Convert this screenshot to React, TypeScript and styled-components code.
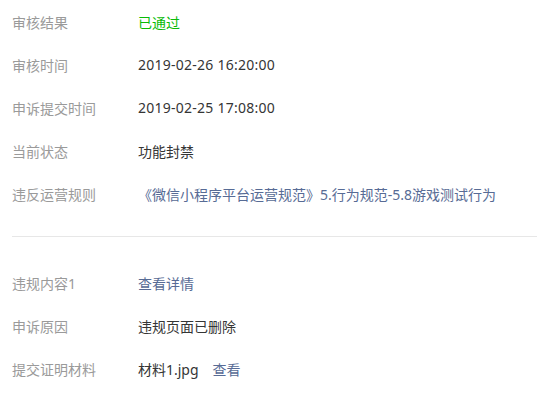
import React from "react";
import styled, { createGlobalStyle } from "styled-components";

const Global = createGlobalStyle`
  html, body { margin: 0; padding: 0; background: #fff; }
  body { font-family: "Noto Sans", "Noto Sans CJK SC", sans-serif; }
`;

const Page = styled.div`
  padding-left: 12px;
  background: #fff;
`;

const Section = styled.div`
  display: flex;
  flex-direction: column;
`;

const Row = styled.div`
  display: flex;
  align-items: center;
  height: 43px;
  font-size: 14px;
`;

const Label = styled.div`
  width: 126px;
  flex-shrink: 0;
  color: #9a9a9a;
`;

const Value = styled.div<{ $tone?: "green" | "link" | "normal" }>`
  color: ${(p) =>
    p.$tone === "green" ? "#09bb07" : p.$tone === "link" ? "#576b95" : "#353535"};
  display: flex;
  align-items: center;
  gap: 14px;
`;

const Latin = styled.span`
  letter-spacing: 0.25px;
`;

const Link = styled.a`
  color: #576b95;
  text-decoration: none;
`;

const Divider = styled.div`
  height: 1px;
  background: #e7e7e7;
  margin: 21px 0 24px;
`;

export default function App() {
  return (
    <Page>
      <Global />
      <Section>
        <Row>
          <Label>审核结果</Label>
          <Value $tone="green">已通过</Value>
        </Row>
        <Row>
          <Label>审核时间</Label>
          <Value>
            <Latin>2019-02-26 16:20:00</Latin>
          </Value>
        </Row>
        <Row>
          <Label>申诉提交时间</Label>
          <Value>
            <Latin>2019-02-25 17:08:00</Latin>
          </Value>
        </Row>
        <Row>
          <Label>当前状态</Label>
          <Value>功能封禁</Value>
        </Row>
        <Row>
          <Label>违反运营规则</Label>
          <Value $tone="link">《微信小程序平台运营规范》5.行为规范-5.8游戏测试行为</Value>
        </Row>
      </Section>
      <Divider />
      <Section>
        <Row>
          <Label>违规内容1</Label>
          <Value>
            <Link href="#">查看详情</Link>
          </Value>
        </Row>
        <Row>
          <Label>申诉原因</Label>
          <Value>违规页面已删除</Value>
        </Row>
        <Row>
          <Label>提交证明材料</Label>
          <Value>
            <span>材料1.jpg</span>
            <Link href="#">查看</Link>
          </Value>
        </Row>
      </Section>
    </Page>
  );
}
